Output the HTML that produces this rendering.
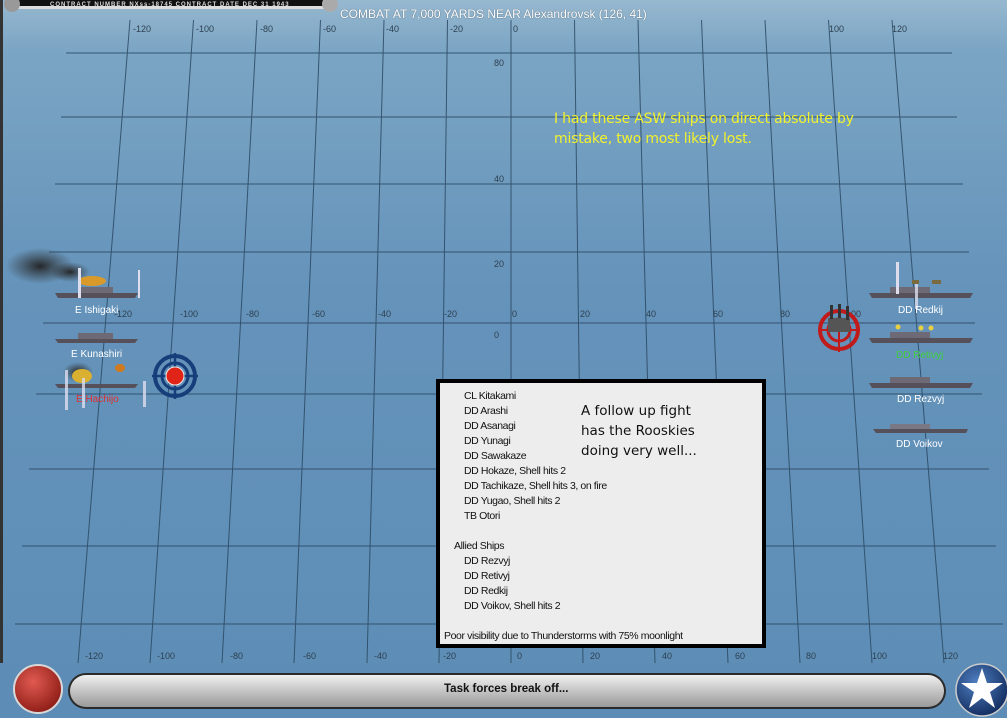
<!DOCTYPE html>
<html><head><meta charset="utf-8"><style>
*{margin:0;padding:0}
body{width:1007px;height:718px;overflow:hidden;position:relative;background:#6393bb;font-family:"Liberation Sans",sans-serif}
.lbl{position:absolute;color:#fff;font-size:10px;white-space:nowrap}
.panel{position:absolute;left:436px;top:379px;width:322px;height:261px;border:4px solid #000;background:#ededed;font-size:10.5px;color:#111;letter-spacing:-0.4px}
.panel div{position:absolute;white-space:nowrap}
.comic{font-family:"Comic Sans MS","DejaVu Sans",sans-serif}
</style></head><body>
<svg width="1007" height="718" style="position:absolute;left:0;top:0">
<defs>
<linearGradient id="sea" x1="0" y1="0" x2="0" y2="1">
<stop offset="0" stop-color="#97b8cf"/><stop offset="0.07" stop-color="#7ba5c4"/><stop offset="0.4" stop-color="#6593ba"/><stop offset="1" stop-color="#5d8db6"/></linearGradient>
<linearGradient id="bar" x1="0" y1="0" x2="0" y2="1"><stop offset="0" stop-color="#f0f0f0"/><stop offset="0.5" stop-color="#c4c4c4"/><stop offset="1" stop-color="#9a9a9a"/></linearGradient>
<radialGradient id="red" cx="0.4" cy="0.35" r="0.7"><stop offset="0" stop-color="#e05a50"/><stop offset="1" stop-color="#8a1a14"/></radialGradient>
<radialGradient id="blu" cx="0.4" cy="0.35" r="0.7"><stop offset="0" stop-color="#4f7fc0"/><stop offset="1" stop-color="#102a5c"/></radialGradient>
<radialGradient id="smoke" cx="0.5" cy="0.5" r="0.5"><stop offset="0" stop-color="#222" stop-opacity="0.95"/><stop offset="1" stop-color="#333" stop-opacity="0"/></radialGradient>
</defs>
<rect width="1007" height="718" fill="url(#sea)"/>
<rect x="0" y="0" width="3" height="718" fill="#333"/>
<g stroke="#2a4862" stroke-width="1" fill="none" opacity="0.85">
<line x1="130" y1="20" x2="78" y2="663"/><line x1="193.5" y1="20" x2="150" y2="663"/><line x1="257" y1="20" x2="222" y2="663"/><line x1="320.5" y1="20" x2="294" y2="663"/><line x1="384" y1="20" x2="367" y2="663"/><line x1="447.5" y1="20" x2="439" y2="663"/><line x1="511" y1="20" x2="511" y2="663"/><line x1="574.5" y1="20" x2="583" y2="663"/><line x1="638" y1="20" x2="655" y2="663"/><line x1="701.5" y1="20" x2="728" y2="663"/><line x1="765" y1="20" x2="800" y2="663"/><line x1="828.5" y1="20" x2="872" y2="663"/><line x1="892" y1="20" x2="944" y2="663"/>
<line x1="66" y1="53" x2="952" y2="53"/><line x1="61" y1="117" x2="957" y2="117"/><line x1="55" y1="184" x2="963" y2="184"/><line x1="49" y1="252" x2="969" y2="252"/><line x1="43" y1="323" x2="975" y2="323"/><line x1="36" y1="394" x2="982" y2="394"/><line x1="29" y1="469" x2="989" y2="469"/><line x1="22" y1="546" x2="996" y2="546"/><line x1="15" y1="624" x2="1003" y2="624"/>
</g>
<g fill="#2d4050" font-size="9" font-family="Liberation Sans">
<text x="133" y="32">-120</text><text x="196" y="32">-100</text><text x="260" y="32">-80</text><text x="323" y="32">-60</text><text x="386" y="32">-40</text><text x="450" y="32">-20</text><text x="513" y="32">0</text>
<text x="829" y="32">100</text><text x="892" y="32">120</text>
<text x="494" y="66">80</text><text x="494" y="182">40</text><text x="494" y="267">20</text><text x="494" y="338">0</text>
<text x="114" y="317">-120</text><text x="180" y="317">-100</text><text x="246" y="317">-80</text><text x="312" y="317">-60</text><text x="378" y="317">-40</text><text x="444" y="317">-20</text><text x="512" y="317">0</text><text x="580" y="317">20</text><text x="646" y="317">40</text><text x="713" y="317">60</text><text x="780" y="317">80</text><text x="846" y="317">100</text>
<text x="85" y="659">-120</text><text x="157" y="659">-100</text><text x="230" y="659">-80</text><text x="303" y="659">-60</text><text x="374" y="659">-40</text><text x="443" y="659">-20</text><text x="517" y="659">0</text><text x="590" y="659">20</text><text x="662" y="659">40</text><text x="735" y="659">60</text><text x="806" y="659">80</text><text x="872" y="659">100</text><text x="943" y="659">120</text>
</g>
<!-- top strip -->
<path d="M10 0 H335 L330 9 H18 Z" fill="#111"/>
<rect x="12" y="6" width="322" height="3" fill="#ddd"/>
<circle cx="12" cy="4" r="8" fill="#999"/><circle cx="330" cy="4" r="8" fill="#aaa"/>
<text x="50" y="6" fill="#ddd" font-size="6" font-weight="bold" font-family="Liberation Sans" letter-spacing="1">CONTRACT NUMBER  NXss-18745      CONTRACT DATE DEC 31 1943</text>
<!-- left ships -->
<ellipse cx="40" cy="266" rx="34" ry="18" fill="url(#smoke)"/>
<ellipse cx="70" cy="272" rx="20" ry="10" fill="url(#smoke)"/>
<ellipse cx="92" cy="281" rx="14" ry="5" fill="#d99a2a"/>
<path d="M55 293 L138 293 L135 298 L58 298 Z" fill="#55505a"/><rect x="78" y="287" width="35" height="6" fill="#6d6a76"/>
<rect x="78" y="268" width="3" height="30" fill="#dde"/><rect x="138" y="270" width="2" height="28" fill="#dde"/>
<path d="M55 339 L138 339 L135 343 L58 343 Z" fill="#55505a"/><rect x="78" y="333" width="35" height="6" fill="#6d6a76"/>
<ellipse cx="78" cy="372" rx="15" ry="10" fill="url(#smoke)"/>
<ellipse cx="82" cy="376" rx="10" ry="7" fill="#d9b030"/><ellipse cx="120" cy="368" rx="5" ry="4" fill="#d07a20"/>
<path d="M55 384 L138 384 L135 388 L58 388 Z" fill="#55505a"/>
<rect x="65" y="370" width="3" height="40" fill="#dde" opacity=".8"/><rect x="82" y="378" width="3" height="30" fill="#dde" opacity=".8"/><rect x="143" y="381" width="3" height="26" fill="#dde" opacity=".8"/>
<circle cx="175" cy="376" r="20" fill="none" stroke="#163e7a" stroke-width="4"/><circle cx="175" cy="376" r="13" fill="none" stroke="#163e7a" stroke-width="3"/>
<line x1="152" y1="376" x2="198" y2="376" stroke="#163e7a" stroke-width="2.5"/><line x1="175" y1="353" x2="175" y2="399" stroke="#163e7a" stroke-width="2.5"/>
<circle cx="175" cy="376" r="9" fill="#e02418" stroke="#eee" stroke-width="1"/>
<!-- right ships -->
<path d="M869 293 L973 293 L970 298 L872 298 Z" fill="#55505a"/><rect x="890" y="287" width="40" height="6" fill="#6d6a76"/>
<rect x="896" y="262" width="3" height="32" fill="#dde"/><rect x="915" y="283" width="3" height="26" fill="#dde" opacity=".8"/>
<rect x="912" y="280" width="7" height="4" fill="#7a6a40"/><rect x="932" y="280" width="9" height="4" fill="#7a6a40"/>
<path d="M869 338 L973 338 L970 343 L872 343 Z" fill="#55505a"/><rect x="890" y="332" width="40" height="6" fill="#6d6a76"/>
<circle cx="898" cy="327" r="2.5" fill="#e8d040"/><circle cx="921" cy="328" r="2.5" fill="#e8d040"/><circle cx="931" cy="328" r="2.5" fill="#e8d040"/>
<path d="M869 383 L973 383 L970 388 L872 388 Z" fill="#55505a"/><rect x="890" y="377" width="40" height="6" fill="#6d6a76"/>
<path d="M873 429 L968 429 L966 433 L876 433 Z" fill="#55505a"/><rect x="890" y="424" width="40" height="5" fill="#7a7884"/>
<circle cx="839" cy="330" r="19" fill="none" stroke="#c01a1a" stroke-width="4"/><circle cx="839" cy="330" r="11" fill="none" stroke="#c01a1a" stroke-width="3"/>
<line x1="818" y1="330" x2="860" y2="330" stroke="#c01a1a" stroke-width="2"/><line x1="839" y1="309" x2="839" y2="352" stroke="#c01a1a" stroke-width="2"/>
<rect x="828" y="318" width="22" height="14" fill="#555"/><rect x="830" y="305" width="3" height="14" fill="#333"/><rect x="838" y="304" width="3" height="14" fill="#333"/><rect x="846" y="306" width="3" height="14" fill="#333"/>
<!-- bottom bar -->
<rect x="0" y="663" width="1007" height="55" fill="#5d8db6"/>
<circle cx="38" cy="689" r="24" fill="url(#red)" stroke="#d8d8d8" stroke-width="2"/>
<rect x="68" y="673" width="878" height="36" rx="18" fill="#2a2a2a"/>
<rect x="70" y="675" width="874" height="32" rx="16" fill="url(#bar)"/>
<circle cx="982" cy="690" r="26" fill="url(#blu)" stroke="#ccc" stroke-width="1.5"/>
<polygon points="982,668 987,683 1003,683 990,692 995,708 982,698 969,708 974,692 961,683 977,683" fill="#fff"/>
</svg>
<div class="lbl" style="left:340px;top:7px;font-size:12px;color:#fff;text-shadow:0 0 1px #345">COMBAT AT 7,000 YARDS NEAR Alexandrovsk (126, 41)</div>
<div class="lbl comic" style="left:554px;top:109px;font-size:14px;color:#f2f22c;line-height:20px;letter-spacing:-0.2px">I had these ASW ships on direct absolute by<br>mistake, two most likely lost.</div>
<div class="lbl" style="left:75px;top:305px">E Ishigaki</div>
<div class="lbl" style="left:71px;top:349px">E Kunashiri</div>
<div class="lbl" style="left:76px;top:394px;color:#e03030">E Hachijo</div>
<div class="lbl" style="left:898px;top:305px">DD Redkij</div>
<div class="lbl" style="left:896px;top:350px;color:#3fd23f">DD Retivyj</div>
<div class="lbl" style="left:897px;top:394px">DD Rezvyj</div>
<div class="lbl" style="left:896px;top:439px">DD Voikov</div>
<div class="panel">
<div style="left:24px;top:7px">CL Kitakami</div>
<div style="left:24px;top:22px">DD Arashi</div>
<div style="left:24px;top:37px">DD Asanagi</div>
<div style="left:24px;top:52px">DD Yunagi</div>
<div style="left:24px;top:67px">DD Sawakaze</div>
<div style="left:24px;top:82px">DD Hokaze, Shell hits 2</div>
<div style="left:24px;top:97px">DD Tachikaze, Shell hits 3,  on fire</div>
<div style="left:24px;top:112px">DD Yugao, Shell hits 2</div>
<div style="left:24px;top:127px">TB Otori</div>
<div style="left:14px;top:157px">Allied Ships</div>
<div style="left:24px;top:172px">DD Rezvyj</div>
<div style="left:24px;top:187px">DD Retivyj</div>
<div style="left:24px;top:202px">DD Redkij</div>
<div style="left:24px;top:217px">DD Voikov, Shell hits 2</div>
<div style="left:4px;top:247px">Poor visibility due to Thunderstorms with 75% moonlight</div>
<div class="comic" style="left:141px;top:18px;font-size:13.5px;line-height:20px;letter-spacing:0">A follow up fight<br>has the Rooskies<br>doing very well...</div>
</div>
<div class="lbl" style="left:444px;top:683px;color:#111;font-size:11.5px;font-weight:bold">Task forces break off...</div>
</body></html>
